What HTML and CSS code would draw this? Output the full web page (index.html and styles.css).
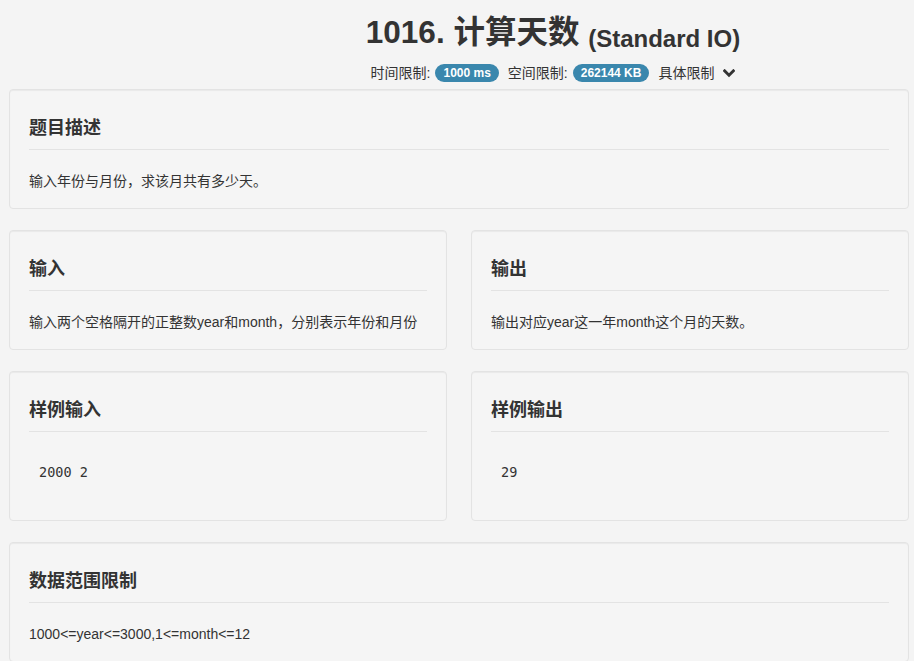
FILE: index.html
```html
<!DOCTYPE html>
<html lang="zh-CN">
<head>
<meta charset="utf-8">
<title>1016. 计算天数</title>
<link rel="stylesheet" href="styles.css">
</head>
<body>
<div class="page">
  <header class="header">
    <h1 class="title">1016. 计算天数 <small>(Standard IO)</small></h1>
    <div class="meta">
      <span>时间限制:</span>
      <span class="badge">1000 ms</span>
      <span class="sp">空间限制:</span>
      <span class="badge">262144 KB</span>
      <span class="sp">具体限制</span>
      <svg class="chev" width="12" height="9" viewBox="0 0 12 9"><path d="M1.6 1.8 L6 6.2 L10.4 1.8" fill="none" stroke="#333" stroke-width="2.8" stroke-linecap="square"/></svg>
    </div>
  </header>

  <section class="well">
    <h3 class="well-title">题目描述</h3>
    <p class="well-body">输入年份与月份，求该月共有多少天。</p>
  </section>

  <div class="row">
    <section class="well">
      <h3 class="well-title">输入</h3>
      <p class="well-body">输入两个空格隔开的正整数year和month，分别表示年份和月份</p>
    </section>
    <section class="well">
      <h3 class="well-title">输出</h3>
      <p class="well-body">输出对应year这一年month这个月的天数。</p>
    </section>
  </div>

  <div class="row">
    <section class="well">
      <h3 class="well-title">样例输入</h3>
      <pre class="sample">2000 2</pre>
    </section>
    <section class="well">
      <h3 class="well-title">样例输出</h3>
      <pre class="sample">29</pre>
    </section>
  </div>

  <section class="well">
    <h3 class="well-title">数据范围限制</h3>
    <p class="well-body">1000&lt;=year&lt;=3000,1&lt;=month&lt;=12</p>
  </section>
</div>
</body>
</html>
```

FILE: styles.css
```css
html, body {
  margin: 0;
  background: #f4f4f4;
}
body {
  font-family: "Liberation Sans", "Noto Sans CJK SC", sans-serif;
  font-size: 14px;
  color: #333;
}
.page {
  padding: 0 5px 0 9px;
}
.header {
  padding-left: 188px;
  padding-top: 14px;
  height: 75px;
  text-align: center;
}
.title {
  margin: 0;
  height: 36px;
  font-size: 31.5px;
  line-height: 36px;
  font-weight: bold;
  color: #333;
}
.title small {
  font-size: 24px;
  font-weight: bold;
  vertical-align: -4px;
}
.meta {
  margin-top: 13px;
  height: 20px;
  display: flex;
  justify-content: center;
  align-items: center;
  font-size: 14px;
  line-height: 20px;
}
.badge {
  display: inline-block;
  background: #3a87ad;
  color: #fff;
  font-size: 12px;
  font-weight: bold;
  line-height: 12px;
  padding: 3px 8px;
  border-radius: 9px;
  margin-left: 5px;
}
.sp {
  margin-left: 9px;
}
.chev {
  margin-left: 9px;
  margin-top: 1px;
}
.well {
  background: #f5f5f5;
  border: 1px solid #e3e3e3;
  border-radius: 4px;
  box-shadow: inset 0 1px 1px rgba(0, 0, 0, 0.05);
  padding: 0 19px;
  margin-bottom: 21px;
}
.row {
  display: grid;
  grid-template-columns: 1fr 1fr;
  column-gap: 24px;
}
.well-title {
  margin: 28px 0 0;
  font-size: 18px;
  line-height: 20px;
  font-weight: bold;
  padding-bottom: 11px;
  border-bottom: 1px solid #e3e3e3;
}
.well-body {
  margin: 21px 0 17px;
  line-height: 20px;
}
.sample {
  margin: 21px 0 29px;
  padding: 9px 10px;
  font-family: "DejaVu Sans Mono", monospace;
  font-size: 13.5px;
  line-height: 20px;
  color: #333;
}
```
